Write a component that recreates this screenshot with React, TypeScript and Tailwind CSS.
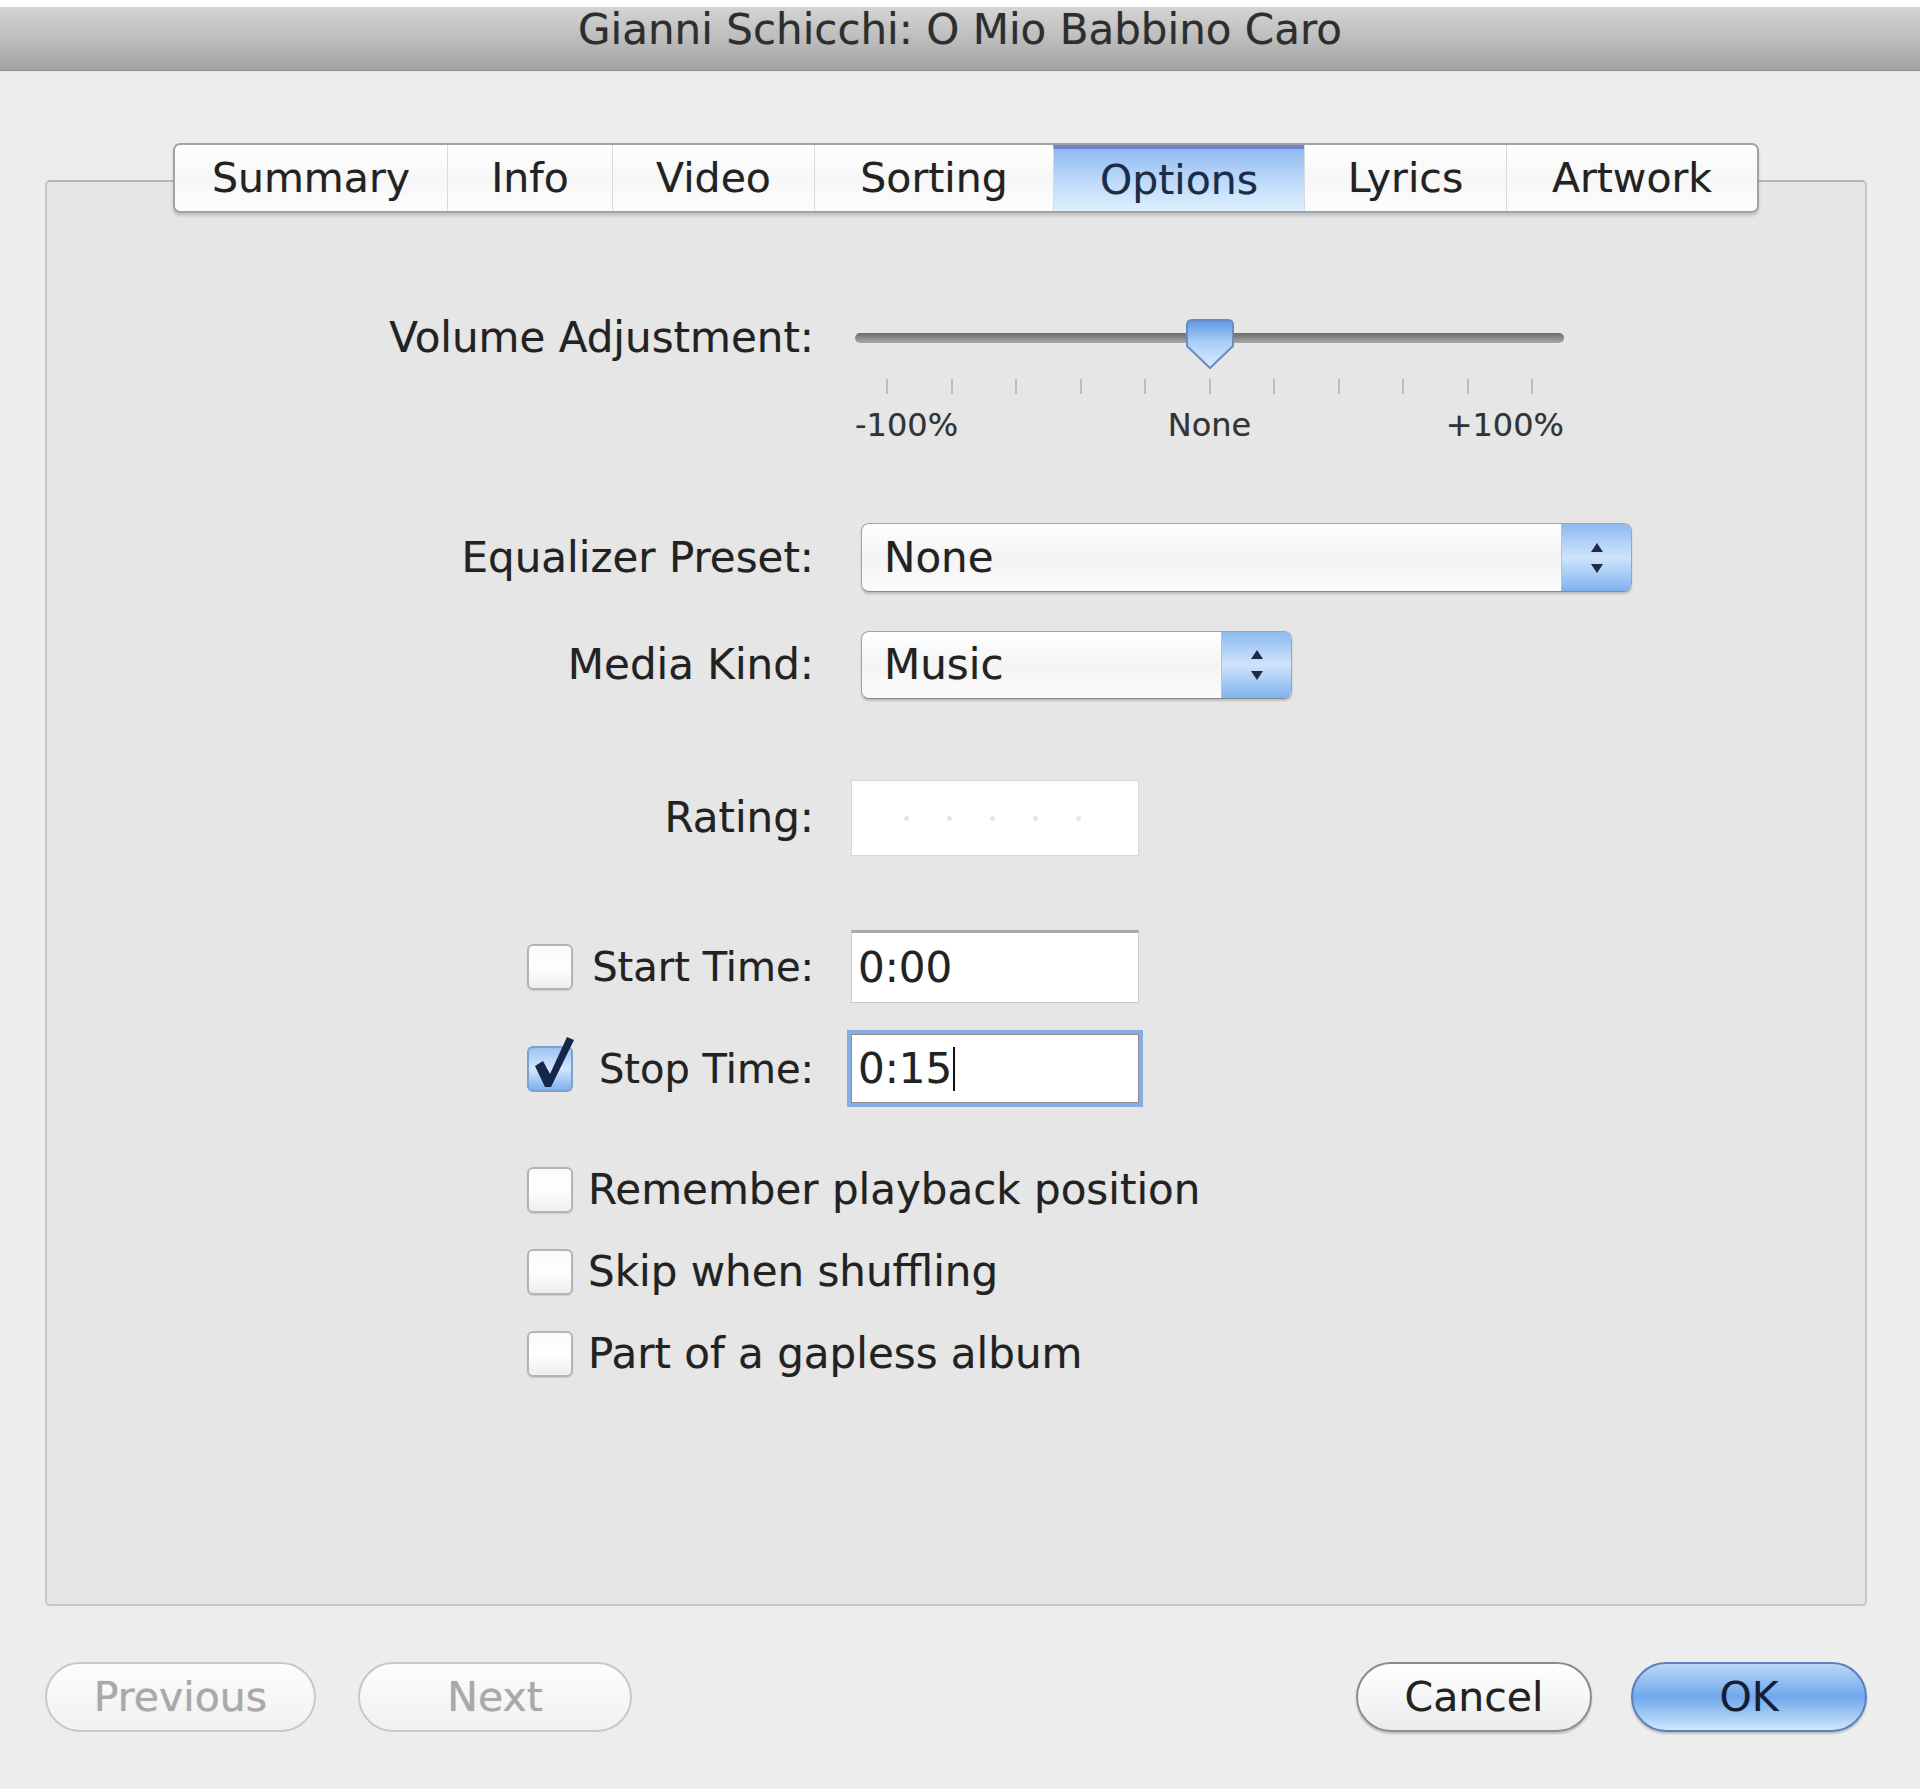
import React from "react";

const tabs = [
  { name: "Summary", w: "w-[272px]" },
  { name: "Info", w: "w-[165px]" },
  { name: "Video", w: "w-[202px]" },
  { name: "Sorting", w: "w-[239px]" },
  { name: "Options", w: "w-[251px]", active: true },
  { name: "Lyrics", w: "w-[202px]" },
  { name: "Artwork", w: "w-[251px]" },
];

function Stepper() {
  return (
    <svg width="16" height="34" viewBox="0 0 16 34">
      <path d="M8 2 L14 11 L2 11 Z" fill="#1f2b45" />
      <path d="M8 32 L14 23 L2 23 Z" fill="#1f2b45" />
    </svg>
  );
}

function Popup({ value, w, h }: { value: string; w: string; h: string }) {
  return (
    <div className={`${w} ${h} flex rounded-[8px] border border-[#a3a3a3] border-b-[#8a8a8a] bg-gradient-to-b from-white via-[#f4f4f4] to-[#fbfbfb] shadow-[0_2px_2px_rgba(0,0,0,0.18)] overflow-hidden`}>
      <div className="flex-1 flex items-center pl-[22px]">{value}</div>
      <div className="w-[70px] flex items-center justify-center bg-gradient-to-b from-[#8dbaf0] via-[#cfe4fb] to-[#7fb2ef] border-l border-[#a8c6ea]">
        <Stepper />
      </div>
    </div>
  );
}

function Checkbox({ checked }: { checked?: boolean }) {
  if (checked) {
    return (
      <div className="relative shrink-0 w-[46px] h-[46px] rounded-[6px] border-2 border-[#7f9fcc] bg-gradient-to-b from-[#9cc4f2] via-[#d3e6fb] to-[#7db0ee]">
        <svg className="absolute left-[1px] -top-[14px]" width="48" height="58" viewBox="0 0 48 58">
          <path d="M5 32 L13 27 L20 40 L37 3 L44 6 L21 53 L15 53 Z" fill="#16264a" />
        </svg>
      </div>
    );
  }
  return (
    <div className="shrink-0 w-[46px] h-[46px] rounded-[6px] border-2 border-[#b4b4b4] bg-gradient-to-b from-[#fafafa] via-white to-[#eeeeee] shadow-[0_1px_1px_rgba(0,0,0,0.12)]" />
  );
}

function Button({ label, kind }: { label: string; kind: "disabled" | "normal" | "default" }) {
  const styles = {
    disabled: "border-[#c8c8c8] text-[#a9a9a9] bg-gradient-to-b from-[#fdfdfd] to-[#f1f1f1]",
    normal: "border-[#8c8c8c] text-[#222] bg-gradient-to-b from-white via-[#f6f6f6] to-[#ececec] shadow-[0_2px_2px_rgba(0,0,0,0.2)]",
    default: "border-[#5c7fb8] text-[#141f33] bg-gradient-to-b from-[#b9d7f8] via-[#6fa8ec] to-[#cfe6fd] shadow-[0_2px_2px_rgba(0,0,0,0.2)]",
  }[kind];
  return (
    <div className={`h-[70px] rounded-full border-2 flex items-center justify-center ${styles}`}>{label}</div>
  );
}

export default function App() {
  const ticks = Array.from({ length: 11 }, (_, i) => i);
  return (
    <div className="w-[1920px] h-[1789px] bg-[#ededed] font-['DejaVu_Sans',sans-serif] text-[42px] text-[#222] leading-none flex flex-col overflow-hidden [text-shadow:0_0_1px_rgba(0,0,0,0.25)]">
      {/* title bar */}
      <div className="h-[7px] bg-white" />
      <div className="h-[64px] bg-gradient-to-b from-[#d4d4d4] via-[#bdbdbd] to-[#a3a3a3] border-b border-[#8d8d8d] flex justify-center pt-[2px] text-[42px] text-[#2e2e2e]">
        Gianni Schicchi: O Mio Babbino Caro
      </div>

      <div className="pl-[45px] pr-[53px] pt-[109px] flex flex-col">
        <div className="h-[1426px] rounded-[5px] border-2 border-[#c6c6c6] border-t-[#b5b5b5] bg-[#e6e6e6] flex flex-col">
          {/* tabs */}
          <div className="-mt-[39px] pl-[20px] flex justify-center text-[41px]">
            <div className="flex h-[70px] rounded-[7px] border-2 border-[#a2a2a2] bg-gradient-to-b from-white via-[#f7f7f7] to-[#fdfdfd] shadow-[0_3px_3px_rgba(0,0,0,0.15)] overflow-hidden">
              {tabs.map((t, i) => (
                <div
                  key={t.name}
                  className={`${t.w} flex items-center justify-center ${i > 0 ? "border-l border-[#dadada]" : ""} ${t.active ? "bg-gradient-to-b from-[#8fbaf0] via-[#bcd9f9] to-[#def0fe] border-t-4 border-t-[#6c84cf] text-[#1b2c4a]" : ""}`}
                >
                  {t.name}
                </div>
              ))}
            </div>
          </div>

          {/* volume */}
          <div className="mt-[95px] flex items-start">
            <div className="w-[767px] h-[60px] flex items-center justify-end">Volume Adjustment:</div>
            <div className="ml-[41px] w-[709px] flex flex-col">
              <div className="relative h-[60px]">
                <div className="mt-[25px] h-[10px] rounded-full bg-gradient-to-b from-[#6d6d6d] to-[#a9a9a9]" />
                <svg className="absolute left-[330px] top-[10px]" width="50" height="52" viewBox="0 0 50 52">
                  <defs>
                    <linearGradient id="th" x1="0" y1="0" x2="0" y2="1">
                      <stop offset="0" stopColor="#5d97e4" />
                      <stop offset="0.45" stopColor="#a9cdf7" />
                      <stop offset="1" stopColor="#dcecfd" />
                    </linearGradient>
                  </defs>
                  <path d="M7 2 H43 Q48 2 48 7 V28 L25 50 L2 28 V7 Q2 2 7 2 Z" fill="url(#th)" stroke="#6b8cbf" strokeWidth="2" />
                </svg>
              </div>
              <div className="mt-[11px] h-[15px] px-[31px] flex justify-between">
                {ticks.map((i) => (
                  <div key={i} className="w-[2px] h-full bg-[#bdbdbd]" />
                ))}
              </div>
              <div className="mt-[15px] grid grid-cols-3 text-[32px] text-[#333]">
                <div className="text-left">-100%</div>
                <div className="text-center">None</div>
                <div className="text-right">+100%</div>
              </div>
            </div>
          </div>

          {/* equalizer */}
          <div className="mt-[82px] flex items-center">
            <div className="w-[767px] text-right">Equalizer Preset:</div>
            <div className="ml-[47px]">
              <Popup value="None" w="w-[771px]" h="h-[69px]" />
            </div>
          </div>

          {/* media kind */}
          <div className="mt-[39px] flex items-center">
            <div className="w-[767px] text-right">Media Kind:</div>
            <div className="ml-[47px]">
              <Popup value="Music" w="w-[431px]" h="h-[68px]" />
            </div>
          </div>

          {/* rating */}
          <div className="mt-[81px] flex items-center">
            <div className="w-[767px] text-right">Rating:</div>
            <div className="ml-[37px] w-[288px] h-[76px] bg-white border border-[#d8d8d8] flex items-center gap-[38px] pl-[52px]">
              {[0, 1, 2, 3, 4].map((i) => (
                <div key={i} className="w-[5px] h-[5px] rounded-full bg-[#e6e6e6]" />
              ))}
            </div>
          </div>

          {/* start time */}
          <div className="mt-[74px] flex items-center">
            <div className="w-[767px] pl-[480px] flex items-center">
              <Checkbox />
              <span className="flex-1 text-right whitespace-nowrap text-[40px]">Start Time:</span>
            </div>
            <div className="ml-[37px] w-[288px] h-[73px] bg-white border border-[#c9c9c9] border-t-[3px] border-t-[#a8a8a8] flex items-center pl-[6px]">
              0:00
            </div>
          </div>

          {/* stop time */}
          <div className="mt-[31px] flex items-center">
            <div className="w-[767px] pl-[480px] flex items-center">
              <Checkbox checked />
              <span className="flex-1 text-right whitespace-nowrap text-[40px]">Stop Time:</span>
            </div>
            <div className="ml-[37px] w-[288px] h-[69px] bg-white border border-[#8c8c8c] shadow-[0_0_0_4px_#85aee4] flex items-center pl-[6px]">
              0:15<span className="ml-[1px] w-[2px] h-[44px] bg-[#111]" />
            </div>
          </div>

          {/* checkboxes */}
          <div className="mt-[63px] ml-[480px] flex flex-col gap-[34px]">
            {["Remember playback position", "Skip when shuffling", "Part of a gapless album"].map((t) => (
              <div key={t} className="h-[48px] flex items-center gap-[15px]">
                <Checkbox />
                <span>{t}</span>
              </div>
            ))}
          </div>
        </div>

        {/* buttons */}
        <div className="mt-[56px] flex justify-between text-[41px]">
          <div className="flex gap-[42px]">
            <div className="w-[271px]"><Button label="Previous" kind="disabled" /></div>
            <div className="w-[274px]"><Button label="Next" kind="disabled" /></div>
          </div>
          <div className="flex gap-[39px]">
            <div className="w-[236px]"><Button label="Cancel" kind="normal" /></div>
            <div className="w-[236px]"><Button label="OK" kind="default" /></div>
          </div>
        </div>
      </div>
    </div>
  );
}
